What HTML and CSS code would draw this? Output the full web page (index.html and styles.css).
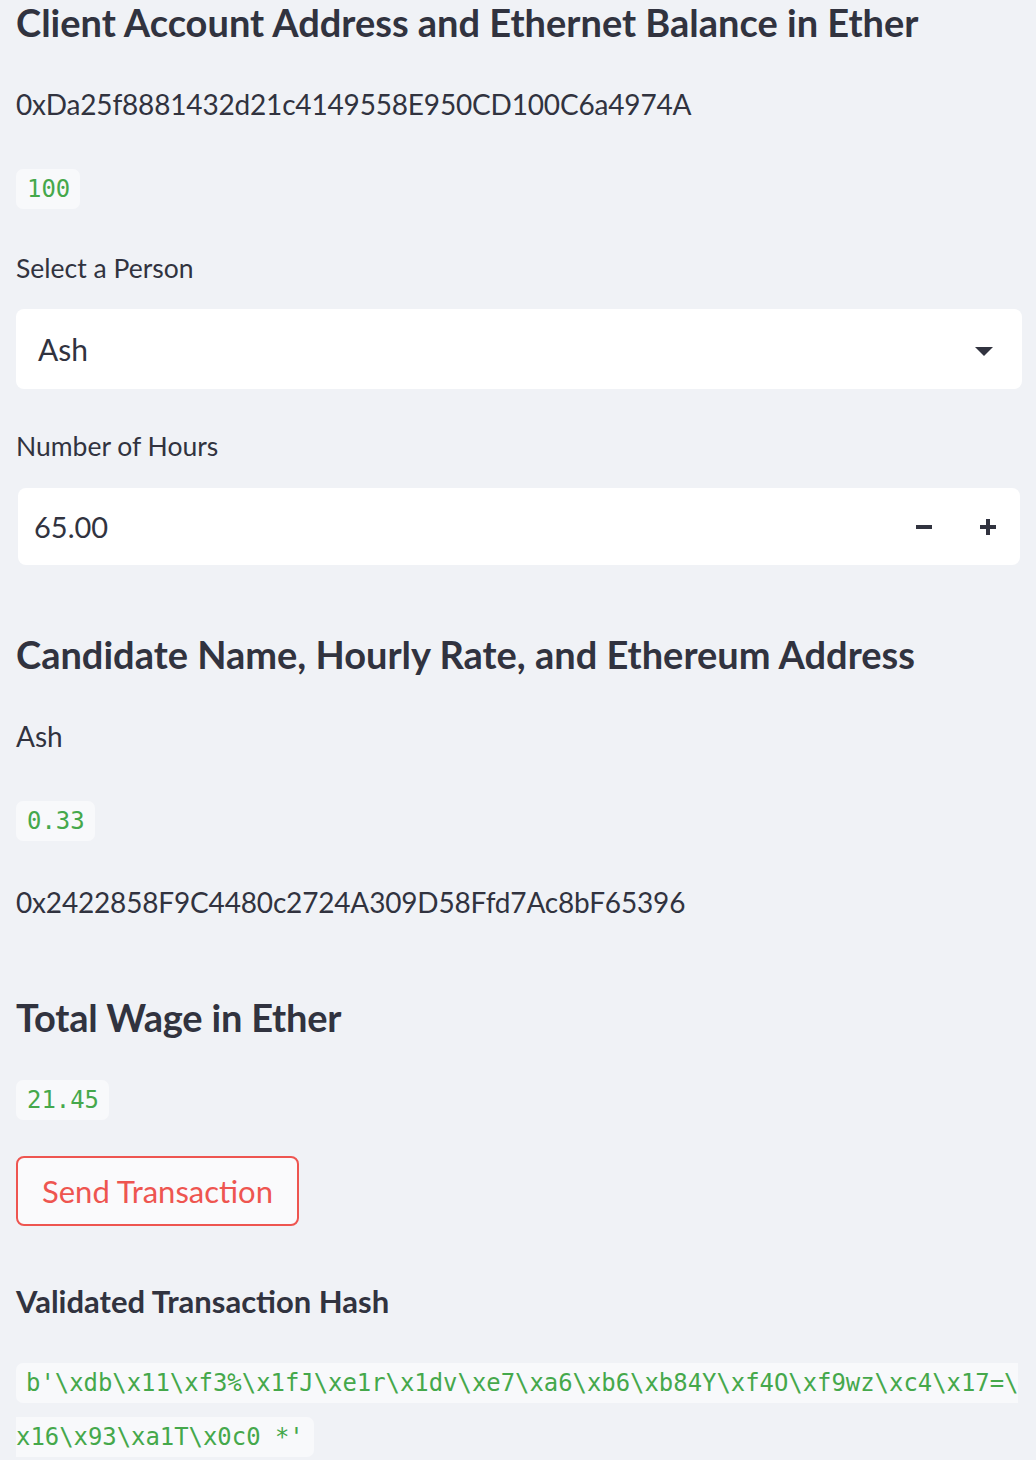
FILE: index.html
```html
<!DOCTYPE html>
<html lang="en">
<head>
<meta charset="utf-8">
<title>Payroll</title>
<link rel="stylesheet" href="styles.css">
</head>
<body>
<main class="app">
  <h2 class="heading heading-client">Client Account Address and Ethernet Balance in Ether</h2>
  <p class="text addr-client">0xDa25f8881432d21c4149558E950CD100C6a4974A</p>
  <div class="pill-row pill-balance"><code class="pill">100</code></div>

  <label class="label label-person">Select a Person</label>
  <div class="select">
    <span class="select-value">Ash</span>
    <svg class="caret" width="18" height="9" viewBox="0 0 18 9" aria-hidden="true"><path d="M0 0H18L9 9Z" fill="#31333f"/></svg>
  </div>

  <label class="label label-hours">Number of Hours</label>
  <div class="number">
    <span class="number-value">65.00</span>
    <div class="steps">
      <span class="step"><svg width="16" height="16" viewBox="0 0 16 16" aria-hidden="true"><rect x="0" y="6" width="16" height="4" fill="#31333f"/></svg></span>
      <span class="step"><svg width="16" height="16" viewBox="0 0 16 16" aria-hidden="true"><rect x="0" y="6" width="16" height="4" fill="#31333f"/><rect x="6" y="0" width="4" height="16" fill="#31333f"/></svg></span>
    </div>
  </div>

  <h2 class="heading heading-candidate">Candidate Name, Hourly Rate, and Ethereum Address</h2>
  <p class="text name-candidate">Ash</p>
  <div class="pill-row pill-rate"><code class="pill">0.33</code></div>
  <p class="text addr-candidate">0x2422858F9C4480c2724A309D58Ffd7Ac8bF65396</p>

  <h2 class="heading heading-total">Total Wage in Ether</h2>
  <div class="pill-row pill-wage"><code class="pill">21.45</code></div>

  <button class="send-btn" type="button">Send Transaction</button>

  <h3 class="subheading">Validated Transaction Hash</h3>
  <p class="hash"><code class="hash-code">b'\xdb\x11\xf3%\x1fJ\xe1r\x1dv\xe7\xa6\xb6\xb84Y\xf4O\xf9wz\xc4\x17=\x16\x93\xa1T\x0c0 *'</code></p>
</main>
</body>
</html>
```

FILE: styles.css
```css
html, body {
  margin: 0;
  padding: 0;
  background: #f0f2f6;
}

body {
  font-family: "Lato", "Noto Sans", sans-serif;
  color: #31333f;
}

.app {
  display: flex;
  flex-direction: column;
  align-items: stretch;
  padding: 0 14px 0 16px;
}

.heading {
  margin: 0;
  font-size: 38px;
  line-height: 44px;
  font-weight: 700;
  letter-spacing: 0;
}

.heading-total {
  letter-spacing: -0.2px;
}

.text {
  margin: 0;
  font-size: 28px;
  line-height: 40px;
  font-weight: 400;
}

.addr-client,
.addr-candidate {
  letter-spacing: -0.17px;
}

.pill-row {
  display: flex;
  height: 40px;
}

.pill {
  display: inline-block;
  height: 40px;
  line-height: 40px;
  padding: 0 10px 0 11px;
  border-radius: 7px;
  background: #f8f9fb;
  color: #45a84b;
  font-family: "DejaVu Sans Mono", monospace;
  font-size: 23.9px;
}

.label {
  display: block;
  margin: 0;
  font-size: 26.5px;
  line-height: 36px;
}

.select {
  display: flex;
  align-items: center;
  justify-content: space-between;
  height: 80px;
  padding: 0 29px 0 22px;
  background: #ffffff;
  border-radius: 8px;
  box-sizing: border-box;
}

.select-value {
  font-size: 30px;
  line-height: 40px;
}

.number-value {
  font-size: 29px;
  line-height: 40px;
}

.caret {
  display: block;
  margin-top: 4px;
}

.number {
  display: flex;
  align-items: center;
  justify-content: space-between;
  height: 77px;
  margin-left: 2px;
  margin-right: 2px;
  padding-left: 16px;
  background: #ffffff;
  border-radius: 8px;
  box-sizing: border-box;
}

.steps {
  display: flex;
  height: 100%;
}

.step {
  display: flex;
  align-items: center;
  justify-content: center;
  width: 64px;
  height: 100%;
}

.step svg {
  display: block;
}

.send-btn {
  align-self: flex-start;
  width: 283px;
  height: 70px;
  padding: 0;
  border: 2px solid #ee5550;
  border-radius: 8px;
  background: #fafafc;
  color: #ee5550;
  font-family: "Lato", "Noto Sans", sans-serif;
  font-size: 31px;
  line-height: 40px;
}

.subheading {
  margin: 0;
  font-size: 31px;
  line-height: 40px;
  font-weight: 700;
}

.hash {
  margin: 0 -8px 0 0;
  font-size: 28px;
  line-height: 51px;
  word-break: break-all;
  line-break: anywhere;
}

.hash-code {
  padding: 6px 10px 6px 10px;
  border-radius: 7px;
  background: #f8f9fb;
  color: #45a84b;
  font-family: "DejaVu Sans Mono", monospace;
  font-size: 23.9px;
}

/* vertical rhythm */
.heading-client { margin-top: 0; }
.addr-client { margin-top: 40px; }
.pill-balance { margin-top: 45px; }
.label-person { margin-top: 41px; }
.select { margin-top: 23px; }
.label-hours { margin-top: 39px; }
.number { margin-top: 24px; }
.heading-candidate { margin-top: 67px; }
.name-candidate { margin-top: 40px; }
.pill-rate { margin-top: 45px; }
.addr-candidate { margin-top: 41px; }
.heading-total { margin-top: 73px; }
.pill-wage { margin-top: 41px; }
.send-btn { margin-top: 36px; }
.subheading { margin-top: 55px; }
.hash { margin-top: 34px; }
```
